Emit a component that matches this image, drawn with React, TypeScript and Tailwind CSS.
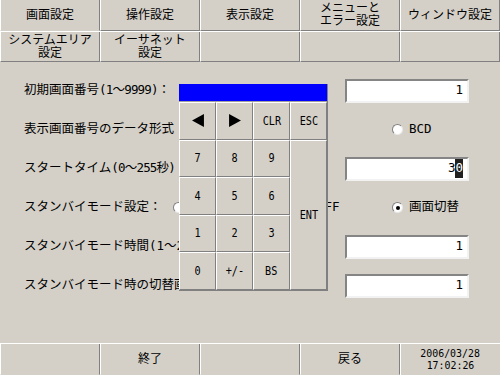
import React from "react"

const jp = "font-['DejaVu_Sans_Mono','Noto_Sans_CJK_JP',monospace]"

const Radio = ({ on }: { on?: boolean }) => (
  <span className="w-[11px] h-[11px] shrink-0 rounded-full bg-white border border-t-[#808080] border-l-[#808080] border-r-[#e8e8e8] border-b-[#e8e8e8] flex items-center justify-center">
    {on && <span className="w-[4px] h-[4px] rounded-full bg-black" />}
  </span>
)

const Field = ({ children }: { children: React.ReactNode }) => (
  <div className="w-[124px] h-[24px] shrink-0 mr-[31px] bg-white border-2 border-t-[#858585] border-l-[#858585] border-r-[#f2f2f2] border-b-[#f2f2f2] flex items-center justify-end pr-[4px] text-[12.5px]">
    {children}
  </div>
)

const Tab = ({ children, noBottom }: { children?: React.ReactNode; noBottom?: boolean }) => (
  <div
    className={`flex items-center justify-center text-center leading-[13px] text-[12px] border-l border-l-white border-r border-r-[#808080] ${
      noBottom ? "border-b border-b-[#d4d0c8]" : "border-b border-b-[#808080]"
    }`}
  >
    {children}
  </div>
)

const Key = ({ children, className = "" }: { children?: React.ReactNode; className?: string }) => (
  <div
    className={`flex items-center justify-center border-t border-l border-t-white border-l-white border-r border-b border-r-[#808080] border-b-[#808080] bg-[#d4d0c8] ${className}`}
  >
    <span className="text-[12px] scale-x-[0.85]">{children}</span>
  </div>
)

export default function App() {
  return (
    <div className={`relative w-[500px] h-[375px] overflow-hidden bg-[#d4d0c8] text-black flex flex-col ${jp}`}>
      {/* tab rows */}
      <div className="grid grid-cols-5 h-[31px]">
        <Tab noBottom>画面設定</Tab>
        <Tab>操作設定</Tab>
        <Tab>表示設定</Tab>
        <Tab>
          メニューと
          <br />
          エラー設定
        </Tab>
        <Tab>ウィンドウ設定</Tab>
      </div>
      <div className="grid grid-cols-5 h-[31px] border-t border-t-white">
        <Tab>
          システムエリア
          <br />
          設定
        </Tab>
        <Tab>
          イーサネット
          <br />
          設定
        </Tab>
        <Tab />
        <Tab />
        <Tab />
      </div>

      {/* settings */}
      <div className="flex-1 flex flex-col pt-[9px] text-[12.5px] whitespace-nowrap">
        <div className="h-[39px] flex items-center pl-[24px]">
          <span className="flex-1 min-w-0 overflow-hidden">
            初期画面番号<span className="tracking-[-0.8px]">(1～9999)</span>：
          </span>
          <Field>1</Field>
        </div>
        <div className="h-[39px] flex items-center pl-[24px]">
          <span className="w-[368px] shrink-0">表示画面番号のデータ形式</span>
          <Radio />
          <span className="ml-[6px]">BCD</span>
        </div>
        <div className="h-[39px] flex items-center pl-[24px]">
          <span className="flex-1 min-w-0 overflow-hidden">
            スタートタイム<span className="tracking-[-0.8px]">(0～255秒)</span>
          </span>
          <Field>
            3<span className="bg-[#202020] text-white">0</span>
          </Field>
        </div>
        <div className="h-[39px] flex items-center pl-[24px]">
          <span className="w-[149px] shrink-0">スタンバイモード設定：</span>
          <span className="w-[130px] shrink-0 flex items-center">
            <Radio />
            <span className="ml-[4px]">ON</span>
          </span>
          <span className="w-[89px] shrink-0 flex items-center">
            <Radio />
            <span className="ml-[3px]">OFF</span>
          </span>
          <Radio on />
          <span className="ml-[6px]">画面切替</span>
        </div>
        <div className="h-[39px] flex items-center pl-[24px]">
          <span className="flex-1 min-w-0 overflow-hidden">スタンバイモード時間(1～255分)：</span>
          <Field>1</Field>
        </div>
        <div className="h-[39px] flex items-center pl-[24px]">
          <span className="flex-1 min-w-0 overflow-hidden">スタンバイモード時の切替画面番号：</span>
          <Field>1</Field>
        </div>
      </div>

      {/* bottom bar */}
      <div className="grid grid-cols-5 h-[32px] border-t border-t-white text-[12.5px]">
        <Tab noBottom />
        <Tab noBottom>終了</Tab>
        <Tab noBottom />
        <Tab noBottom>戻る</Tab>
        <div className="flex flex-col items-center justify-center border-l border-l-white text-[11px] leading-[12px]">
          <span className="scale-x-[0.9]">2006/03/28</span>
          <span className="scale-x-[0.9]">17:02:26</span>
        </div>
      </div>

      {/* numeric keypad popup */}
      <div className="absolute left-[179px] top-[84px] w-[149px] flex flex-col border-r border-b border-r-[#808080] border-b-[#808080]">
        <div className="h-[18px] bg-[#0000ff] border-b border-b-[#a0a0a0]" />
        <div className="grid grid-cols-4 grid-rows-[repeat(5,37.5px)]">
          <Key>
            <svg width="14" height="13" viewBox="0 0 14 13">
              <polygon points="0,6.5 14,0 14,13" fill="black" />
            </svg>
          </Key>
          <Key>
            <svg width="14" height="13" viewBox="0 0 14 13">
              <polygon points="14,6.5 0,0 0,13" fill="black" />
            </svg>
          </Key>
          <Key>CLR</Key>
          <Key>ESC</Key>
          <Key>7</Key>
          <Key>8</Key>
          <Key>9</Key>
          <Key className="row-span-4">ENT</Key>
          <Key>4</Key>
          <Key>5</Key>
          <Key>6</Key>
          <Key>1</Key>
          <Key>2</Key>
          <Key>3</Key>
          <Key>0</Key>
          <Key>+/-</Key>
          <Key>BS</Key>
        </div>
      </div>
    </div>
  )
}
